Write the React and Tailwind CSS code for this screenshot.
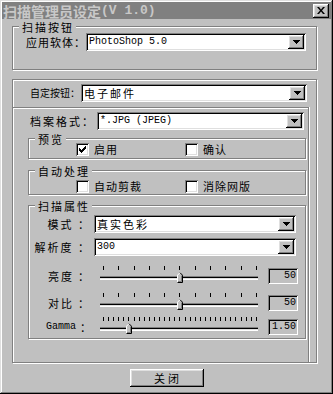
import React from "react";

const cjk = "font-['Noto_Sans_CJK_SC','Liberation_Sans',sans-serif]";
const mono = "font-mono";
const raised =
  "shadow-[inset_-1px_-1px_0_#000,inset_1px_1px_0_#fff,inset_-2px_-2px_0_#808080,inset_2px_2px_0_#dfdfdf]";
const sunken =
  "shadow-[inset_1px_1px_0_#808080,inset_-1px_-1px_0_#fff,inset_2px_2px_0_#000,inset_-2px_-2px_0_#dfdfdf]";

function Group({ label, className = "", children }) {
  return (
    <div
      className={`relative border border-[#808080] shadow-[inset_1px_1px_0_#fff,1px_1px_0_#fff] ${className}`}
    >
      {label && (
        <span
          className={`absolute left-[6px] -top-[5px] bg-[#c0c0c0] pl-[3px] pr-[2px] text-[11px] leading-[11px] tracking-[2px] ${cjk}`}
        >
          {label}
        </span>
      )}
      {children}
    </div>
  );
}

function Arrow() {
  return (
    <svg width="7" height="4" viewBox="0 0 7 4">
      <rect x="0" y="0" width="7" height="1" fill="#000" />
      <rect x="1" y="1" width="5" height="1" fill="#000" />
      <rect x="2" y="2" width="3" height="1" fill="#000" />
      <rect x="3" y="3" width="1" height="1" fill="#000" />
    </svg>
  );
}

function Select({ value, className = "", latin = false }) {
  return (
    <div className={`flex h-[18px] bg-white ${sunken} p-[2px] items-center ${className}`}>
      <span
        className={`flex-1 pl-[1px] whitespace-nowrap leading-none ${
          latin ? `text-[10px] ${mono}` : `text-[11px] tracking-[2px] ${cjk}`
        }`}
      >
        {value}
      </span>
      <div className={`w-[16px] h-[14px] bg-[#c0c0c0] ${raised} flex items-center justify-center`}>
        <Arrow />
      </div>
    </div>
  );
}

function Check({ checked, label, className = "" }) {
  return (
    <div className={`flex items-center ${className}`}>
      <div className={`w-[13px] h-[13px] bg-white ${sunken} flex items-center justify-center`}>
        {checked && (
          <svg width="7" height="7" viewBox="0 0 7 7">
            <path d="M0 2h1v1h1v1h1v-1h1v-1h1v-1h1v-1h1v3h-1v1h-1v1h-1v1h-1v1h-1v-1h-1v-1h-1v-1h-1z" fill="#000" />
          </svg>
        )}
      </div>
      <span className={`ml-[5px] text-[11px] leading-none tracking-[1px] ${cjk}`}>{label}</span>
    </div>
  );
}

function Thumb() {
  return (
    <svg width="6" height="11" viewBox="0 0 6 11">
      <path d="M0 3L3 0L6 3V11H0Z" fill="#c0c0c0" />
      <path d="M0.5 10.5V3.2L3 0.7" stroke="#fff" fill="none" />
      <path d="M3 0.7L5.5 3.2V10.5H0.5" stroke="#000" fill="none" />
      <path d="M4.5 3.6V9.5H1" stroke="#808080" fill="none" />
    </svg>
  );
}

function Slider({ ticks, frac }) {
  const list = Array.from({ length: ticks });
  return (
    <div className="relative w-[158px] h-[22px]">
      <div className="absolute top-[2px] left-[3px] w-[154px] flex justify-between">
        {list.map((_, i) => (
          <div key={i} className="w-px h-[4px] bg-black" />
        ))}
      </div>
      <div className="absolute left-0 right-0 top-[12px] h-[4px] border-t border-[#808080] border-b border-b-white bg-black shadow-[inset_0_-1px_0_#dfdfdf]" />
      <div className="absolute top-[8px]" style={{ left: `${Math.round(frac * 153)}px` }}>
        <Thumb />
      </div>
    </div>
  );
}

function ValueBox({ v }) {
  return (
    <div
      className={`w-[30px] h-[16px] bg-[#c0c0c0] shadow-[inset_1px_1px_0_#808080,inset_-1px_-1px_0_#fff,inset_2px_2px_0_#000] flex items-center justify-end pr-[2px] text-[10px] leading-none ${mono}`}
    >
      {v}
    </div>
  );
}

function SliderRow({ label, latin, ticks, frac, v, className = "" }) {
  return (
    <div className={`flex h-[22px] ${className}`}>
      <div
        className={`w-[65px] pr-[3px] flex items-center justify-end pt-[2px] leading-none whitespace-nowrap ${
          latin ? `text-[10px] ${mono}` : `text-[11px] tracking-[2px] ${cjk}`
        }`}
      >
        {label}
        <span className={`ml-[4px] text-[11px] ${cjk}`}>：</span>
      </div>
      <div className="ml-[6px]">
        <Slider ticks={ticks} frac={frac} />
      </div>
      <div className="ml-[10px] mt-[4px]">
        <ValueBox v={v} />
      </div>
    </div>
  );
}

export default function App() {
  return (
    <div
      className={`w-[333px] h-[394px] bg-[#c0c0c0] p-[2px] flex flex-col text-black ${cjk} shadow-[inset_-1px_-1px_0_#000,inset_1px_1px_0_#dfdfdf,inset_-2px_-2px_0_#808080,inset_2px_2px_0_#fff]`}
    >
      {/* title bar */}
      <div className="h-[17px] bg-[#808080] flex items-center justify-between pl-[1px] pr-[2px]">
        <div className="flex items-center text-[#c8c8c8] font-bold leading-none whitespace-nowrap">
          <span className={`text-[14px] ${cjk}`}>扫描管理员设定</span>
          <span className={`text-[13px] ${mono}`}>(V 1.0)</span>
        </div>
        <div className={`w-[16px] h-[14px] bg-[#c0c0c0] ${raised} flex items-center justify-center`}>
          <svg width="8" height="7" viewBox="0 0 8 7">
            <path d="M0 0h2l2 2.5L6 0h2L5 3.5L8 7H6L4 4.5L2 7H0l3-3.5z" fill="#000" />
          </svg>
        </div>
      </div>

      <div className="pl-[10px] flex flex-col">
        {/* 扫描按钮 */}
        <Group label="扫描按钮" className="mt-[7px] w-[305px] h-[44px]">
          <div className="flex items-center pt-[6px] pl-[13px]">
            <div className="w-[60px] text-[11px] leading-none tracking-[1px] whitespace-nowrap">应用软体：</div>
            <Select value="PhotoShop 5.0" latin className="w-[220px]" />
          </div>
        </Group>

        {/* big frame */}
        <Group className="mt-[9px] w-[305px] h-[284px] flex flex-col">
          <div className="flex items-center pt-[4px] pl-[17px]">
            <div className="w-[51px] text-[10px] leading-none whitespace-nowrap">自定按钮：</div>
            <Select value="电子邮件" className="w-[226px]" />
          </div>

          <div className="mt-[5px] w-[296px] flex-1 border-t border-r border-[#808080] shadow-[inset_0_1px_0_#fff,1px_0_0_#fff] flex flex-col">
            <div className="flex items-center pt-[4px] pl-[17px]">
              <div className="w-[67px] text-[11px] leading-none tracking-[2px] whitespace-nowrap">档案格式：</div>
              <Select value="*.JPG (JPEG)" latin className="w-[207px]" />
            </div>

            <Group label="预览" className="mt-[8px] ml-[15px] w-[278px] h-[21px]">
              <div className="flex pt-[4px]">
                <Check checked label="启用" className="ml-[47px] w-[109px]" />
                <Check label="确认" />
              </div>
            </Group>

            <Group label="自动处理" className="mt-[11px] ml-[15px] w-[278px] h-[25px]">
              <div className="flex pt-[9px]">
                <Check label="自动剪裁" className="ml-[47px] w-[109px]" />
                <Check label="消除网版" />
              </div>
            </Group>

            <Group label="扫描属性" className="mt-[10px] ml-[15px] w-[278px] h-[134px]">
              <div className="flex flex-col pt-[9px]">
                <div className="flex items-center">
                  <div className="w-[65px] pr-[3px] text-right text-[11px] leading-none tracking-[2px] whitespace-nowrap">
                    模式 ：
                  </div>
                  <Select value="真实色彩" className="w-[202px]" />
                </div>
                <div className="flex items-center mt-[5px]">
                  <div className="w-[65px] pr-[3px] text-right text-[11px] leading-none tracking-[2px] whitespace-nowrap">
                    解析度 ：
                  </div>
                  <Select value="300" latin className="w-[202px]" />
                </div>
                <SliderRow label="亮度" ticks={11} frac={0.5} v="50" className="mt-[8px]" />
                <SliderRow label="对比" ticks={11} frac={0.5} v="50" className="mt-[5px]" />
                <SliderRow label="Gamma" latin ticks={31} frac={5 / 30} v="1.50" className="mt-[2px]" />
              </div>
            </Group>
          </div>
        </Group>

        {/* close button */}
        <div className="flex justify-center mt-[6px] -ml-[10px]">
          <div
            className={`w-[74px] h-[18px] bg-[#c0c0c0] ${raised} flex items-center justify-center text-[11px] leading-none tracking-[3px] pl-[3px]`}
          >
            关闭
          </div>
        </div>
      </div>
    </div>
  );
}
